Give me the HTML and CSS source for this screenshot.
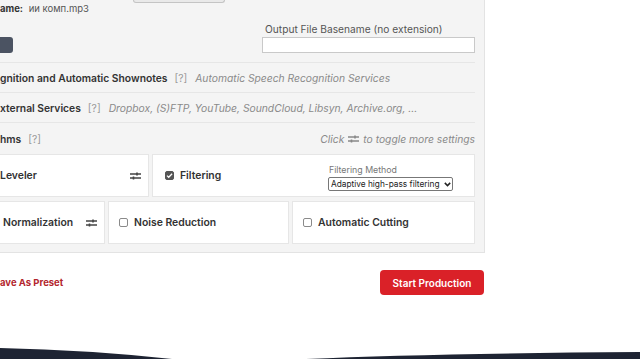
FILE: index.html
```html
<!DOCTYPE html>
<html lang="en">

<head>
    <meta charset="UTF-8">
    <meta name="viewport" content="width=device-width, initial-scale=1.0">
    <title>New Production</title>
    <link rel="stylesheet" href="styles.css">
</head>

<body>
    <div class="page">
        <div class="panel">
            <!-- input file + output basename -->
            <div class="file-row">
                <div class="file-col">
                    <div class="file-btn"></div>
                    <p class="file-name"><b>ame:</b> ии комп.mp3</p>
                    <button class="dark-btn"></button>
                </div>
                <div class="out-col">
                    <label for="basename" class="field-label">Output File Basename (no extension)</label>
                    <input type="text" id="basename">
                </div>
            </div>

            <div class="section">
                <span class="sec-title">gnition and Automatic Shownotes</span>
                <span class="help">[?]</span>
                <span class="sec-note">Automatic Speech Recognition Services</span>
            </div>
            <div class="section">
                <span class="sec-title">xternal Services</span>
                <span class="help">[?]</span>
                <span class="sec-note">Dropbox, (S)FTP, YouTube, SoundCloud, Libsyn, Archive.org, ...</span>
            </div>

            <div class="algorithms">
                <div class="algo-head">
                    <span class="sec-title">hms</span>
                    <span class="help">[?]</span>
                    <span class="sec-note toggle-note">Click
                        <svg class="sliders" width="11" height="8" viewBox="0 0 11 8">
                            <path d="M0 2h11M0 6h11" stroke="#888" stroke-width="1.3" />
                            <path d="M7 0.5v3M3.5 4.5v3" stroke="#888" stroke-width="1.6" />
                        </svg>
                        to toggle more settings</span>
                </div>

                <div class="cards cards-top">
                    <div class="card">
                        <span class="card-title">Leveler</span>
                        <svg class="sliders" width="11" height="8" viewBox="0 0 11 8">
                            <path d="M0 2h11M0 6h11" stroke="#444" stroke-width="1.3" />
                            <path d="M7 0.5v3M3.5 4.5v3" stroke="#444" stroke-width="1.6" />
                        </svg>
                    </div>
                    <div class="card card-filter">
                        <span class="check checked">
                            <svg width="9" height="9" viewBox="0 0 9 9">
                                <path d="M2 4.6l1.7 1.7 3.4-3.6" fill="none" stroke="#fff" stroke-width="1.3" />
                            </svg>
                        </span>
                        <span class="card-title">Filtering</span>
                        <div class="method">
                            <label for="filter-method" class="method-label">Filtering Method</label>
                            <div class="select-wrap">
                                <select id="filter-method">
                                    <option>Adaptive high-pass filtering</option>
                                </select>
                                <svg class="chevron" width="7" height="5" viewBox="0 0 7 5">
                                    <path d="M0.8 0.9l2.7 2.7 2.7-2.7" fill="none" stroke="#222" stroke-width="1.5" />
                                </svg>
                            </div>
                        </div>
                    </div>
                </div>

                <div class="cards cards-bottom">
                    <div class="card">
                        <span class="card-title norm">Normalization</span>
                        <svg class="sliders" width="11" height="8" viewBox="0 0 11 8">
                            <path d="M0 2h11M0 6h11" stroke="#444" stroke-width="1.3" />
                            <path d="M7 0.5v3M3.5 4.5v3" stroke="#444" stroke-width="1.6" />
                        </svg>
                    </div>
                    <div class="card card-check">
                        <span class="check"></span>
                        <span class="card-title">Noise Reduction</span>
                    </div>
                    <div class="card card-check">
                        <span class="check"></span>
                        <span class="card-title">Automatic Cutting</span>
                    </div>
                </div>
            </div>
        </div>

        <div class="actions">
            <a href="#" class="preset-link">ave As Preset</a>
            <button class="start-btn">Start Production</button>
        </div>
    </div>

    <svg class="footer-wave" width="640" height="20" viewBox="0 0 640 20" preserveAspectRatio="none">
        <path d="M0 9 Q 90 11 172 20 L 306 20 Q 430 14.5 640 13 L 640 20 L 0 20 Z" fill="#1e2433" />
    </svg>
</body>

</html>
```

FILE: styles.css
```css
* {
    margin: 0;
    padding: 0;
    box-sizing: border-box;
}

body {
    font-family: Inter, "Noto Sans", sans-serif;
    background-color: #fff;
    color: #333;
    width: 640px;
    height: 360px;
    overflow: hidden;
}

.page {
    width: 485px;
}

.panel {
    background-color: #f4f4f4;
    border-right: 1px solid #e3e3e3;
    border-bottom: 1px solid #e3e3e3;
    padding-right: 9px;
}

/* file row */
.file-row {
    display: grid;
    grid-template-columns: 262px 1fr;
    height: 63px;
    border-bottom: 1px solid #e6e6e6;
}

.file-btn {
    width: 92px;
    height: 3px;
    margin-left: 133px;
    background-color: #e9e9e9;
    border: 1px solid #c4c4c4;
    border-top: none;
    border-radius: 0 0 3px 3px;
}

.file-name {
    font-size: 9.5px;
    line-height: 12px;
    color: #555;
}

.file-name b {
    color: #333;
    font-weight: 700;
    margin-right: 3px;
}

.dark-btn {
    display: block;
    width: 13px;
    height: 16px;
    margin-top: 22px;
    background-color: #4b5362;
    border: none;
    border-radius: 0 3px 3px 0;
}

.out-col {
    padding-top: 22px;
}

.field-label {
    display: block;
    font-size: 10.2px;
    line-height: 14px;
    color: #555;
    margin-left: 3px;
    margin-bottom: 1px;
}

.out-col input {
    display: block;
    width: 213px;
    height: 16px;
    border: 1px solid #c9c9c9;
    background-color: #fff;
}

/* collapsible sections */
.section,
.algo-head {
    display: flex;
    align-items: center;
    height: 30px;
    font-size: 10.3px;
}

.section {
    border-bottom: 1px solid #e6e6e6;
}

.algo-head {
    height: 31px;
}

.sec-title {
    font-weight: 600;
    color: #333;
}

.help {
    color: #999;
    margin-left: 7px;
}

.sec-note {
    color: #8a8a8a;
    font-style: italic;
    margin-left: 8px;
}

.toggle-note {
    margin-left: auto;
    display: flex;
    align-items: center;
    gap: 4px;
}

/* algorithm cards */
.cards {
    display: grid;
    gap: 3px;
    margin-left: -4px;
}

.cards-top {
    grid-template-columns: 153px 1fr;
    margin-bottom: 4px;
}

.cards-bottom {
    grid-template-columns: 109px 181px 1fr;
    padding-bottom: 8px;
}

.card {
    display: flex;
    align-items: center;
    justify-content: space-between;
    height: 43px;
    background-color: #fff;
    border: 1px solid #e6e6e6;
    padding: 0 7px 0 3px;
}

.card-title {
    font-size: 10.4px;
    font-weight: 600;
    color: #333;
}

.norm {
    margin-left: 3px;
}

.card-filter {
    justify-content: flex-start;
    padding-left: 12px;
    padding-right: 21px;
}

.card-check {
    justify-content: flex-start;
    padding-left: 10px;
}

.check {
    display: inline-flex;
    width: 9px;
    height: 9px;
    border: 1px solid #8a8a8a;
    border-radius: 2px;
    margin-right: 6px;
    background-color: #fff;
}

.checked {
    background-color: #555;
    border-color: #555;
}

.checked svg {
    margin: -1px;
}

.method {
    margin-left: auto;
    display: flex;
    flex-direction: column;
    padding-top: 3px;
}

.method-label {
    font-size: 8.8px;
    color: #777;
    margin-left: 1px;
    margin-bottom: 2px;
}

.select-wrap {
    position: relative;
    width: 125px;
}

.select-wrap select {
    appearance: none;
    display: block;
    width: 125px;
    height: 14px;
    padding: 0 0 0 2px;
    font-family: inherit;
    font-size: 8.3px;
    color: #222;
    border: 1px solid #777;
    border-radius: 2px;
    background-color: #fff;
}

.chevron {
    position: absolute;
    right: 2px;
    top: 5px;
    pointer-events: none;
}

/* bottom actions */
.actions {
    display: flex;
    justify-content: space-between;
    align-items: center;
    margin-top: 17px;
    padding-right: 1px;
}

.preset-link {
    color: #b3262d;
    font-size: 9.5px;
    font-weight: 700;
    text-decoration: none;
}

.start-btn {
    width: 104px;
    height: 25px;
    background-color: #da2128;
    color: #fff;
    font-family: inherit;
    font-size: 10px;
    font-weight: 600;
    border: none;
    border-radius: 4px;
    cursor: pointer;
}

.footer-wave {
    display: block;
    margin-top: 44px;
}
```
